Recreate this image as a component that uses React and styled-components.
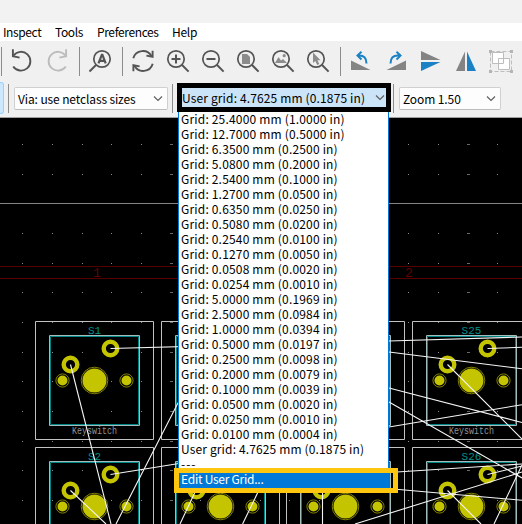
import React from "react";
import styled, { createGlobalStyle } from "styled-components";

const GlobalStyle = createGlobalStyle`
  * { box-sizing: border-box; }
  body { margin: 0; background: #000; overflow: hidden; }
`;

const Window = styled.div`
  position: relative;
  display: flex;
  flex-direction: column;
  width: 522px;
  height: 524px;
  overflow: hidden;
  background: #000;
  color: #000;
  font: 400 12px/15px "Noto Sans CJK KR", "Noto Sans", sans-serif;
`;

const TitleBar = styled.header`
  flex: none;
  height: 23px;
  background: #f2f2f2;
`;

const MenuBar = styled.nav`
  flex: none;
  display: flex;
  gap: 14px;
  height: 18px;
  padding-left: 3px;
  background: #fff;
  line-height: 18px;
`;

const MenuItem = styled.span`
  flex: none;
  width: ${(p) => p.$width}px;
  letter-spacing: ${(p) => p.$tracking || 0}px;
  white-space: nowrap;
`;

const IconBar = styled.div`
  flex: none;
  height: 42px;
  background: #f0f0f0;
`;

const IconStrip = styled.svg`
  display: block;
`;

const ControlBar = styled.div`
  flex: none;
  display: flex;
  align-items: flex-start;
  height: 35px;
  background: #f0f0f0;
  border-bottom: 1px solid #a0a0a0;
`;

const ActiveTool = styled.div`
  width: 4px;
  height: 32px;
  margin-top: -1px;
  border: 1px solid #99d1ff;
  border-left: 0;
  border-radius: 0 3px 3px 0;
  background: #cce8ff;
`;

const Divider = styled.i`
  width: 1px;
  height: 29px;
  margin: 1px ${(p) => p.$after}px 0 ${(p) => p.$before}px;
  background: #8c8c8c;
`;

const Select = styled.div`
  display: flex;
  align-items: center;
  justify-content: space-between;
  width: ${(p) => p.$width}px;
  height: 23px;
  margin-top: 4px;
  padding: 0 4px 0 3px;
  border: 1px solid #d0d0d0;
  border-bottom-color: #bdbdbd;
  border-radius: 2px;
  background: #fdfdfd;
  white-space: nowrap;
`;

const Label = styled.span`
  letter-spacing: ${(p) => p.$tracking || 0}px;
`;

const GridSelect = styled(Select)`
  width: 214px;
  height: 29px;
  margin-top: 0;
  padding: 0 1px 0 0;
  border: 5px solid #000;
  border-radius: 0;
  background: #cce4f7;
`;

const Canvas = styled.svg`
  flex: none;
  display: block;
`;

const GridMenu = styled.ul`
  position: absolute;
  left: 178px;
  top: 112px;
  width: 211px;
  margin: 0;
  padding: 0;
  list-style: none;
  border: solid #0078d7;
  border-width: 0 1px 1px;
  background: #fff;
`;

const GridOption = styled.li`
  height: 15px;
  padding-left: 2px;
  line-height: 13px;
  letter-spacing: ${(p) => p.$tracking ?? 0.18}px;
  white-space: nowrap;
  color: ${(p) => (p.$active ? "#fff" : "#000")};
  background: ${(p) => (p.$active ? "#0078d7" : "transparent")};
`;

const Highlight = styled.div`
  position: absolute;
  left: 174px;
  top: 468px;
  width: 224px;
  height: 25px;
  border: 5px solid #ffc610;
`;

const Chevron = () => (
  <svg width="10" height="7" viewBox="0 0 10 7">
    <path d="M1 1.5l4 4 4-4" fill="none" stroke="#5c5c5c" strokeWidth="1.1" />
  </svg>
);

const GRIDS = [
  "25.4000 mm (1.0000 in)", "12.7000 mm (0.5000 in)", "6.3500 mm (0.2500 in)",
  "5.0800 mm (0.2000 in)", "2.5400 mm (0.1000 in)", "1.2700 mm (0.0500 in)",
  "0.6350 mm (0.0250 in)", "0.5080 mm (0.0200 in)", "0.2540 mm (0.0100 in)",
  "0.1270 mm (0.0050 in)", "0.0508 mm (0.0020 in)", "0.0254 mm (0.0010 in)",
  "5.0000 mm (0.1969 in)", "2.5000 mm (0.0984 in)", "1.0000 mm (0.0394 in)",
  "0.5000 mm (0.0197 in)", "0.2500 mm (0.0098 in)", "0.2000 mm (0.0079 in)",
  "0.1000 mm (0.0039 in)", "0.0500 mm (0.0020 in)", "0.0250 mm (0.0010 in)",
  "0.0100 mm (0.0004 in)",
];

const Magnifier = ({ x, children }) => (
  <g transform={`translate(${x} 59)`}>
    <circle r="8.2" fill="none" stroke="#545454" strokeWidth="1.7" />
    <path d="M5.8 5.8L12.6 12.6" stroke="#545454" strokeWidth="2" />
    {children}
  </g>
);

const Icons = () => (
  <IconStrip width="522" height="42" viewBox="0 41 522 42">
    <g fill="none" stroke="#8c8c8c">
      <path d="M1.5 47v29M79.5 47v29M122.5 47v29M340.5 47v29" />
    </g>
    <g fill="none" stroke="#545454" strokeWidth="1.9">
      <path d="M13.5 55.5A9.4 9.4 0 1 1 13.2 66.5" />
      <path d="M12.9 49.3V56.2L19.6 57.6" strokeWidth="1.9" />
      <g stroke="#bcbcbc">
        <path d="M65.5 55.5A9.4 9.4 0 1 0 65.8 66.5" />
        <path d="M66.1 49.3V56.2L59.4 57.6" strokeWidth="1.9" />
      </g>
      <path d="M133.3 58.3A9.9 9.9 0 0 1 151.6 56.4M152.7 63.7A9.9 9.9 0 0 1 134.4 65.6" />
      <path d="M152.6 50.8V56.8L146.4 55.6M133.4 71.2V65.2L139.6 66.4" strokeWidth="1.9" />
    </g>
    <g>
      <circle cx="102" cy="59" r="8.2" fill="none" stroke="#545454" strokeWidth="1.7" />
      <path d="M96 65L89.5 71.5" stroke="#545454" strokeWidth="2" />
      <path d="M98.5 63.4L101.8 54.8H102.4L105.7 63.4M99.8 60.8H104.4" fill="none" stroke="#545454" strokeWidth="2.2" />
    </g>
    <Magnifier x={176}><path d="M-4.5 0h9M0-4.5v9" stroke="#545454" strokeWidth="2" /></Magnifier>
    <Magnifier x={211}><path d="M-4.5 0h9" stroke="#545454" strokeWidth="2" /></Magnifier>
    <Magnifier x={246}><path d="M-4-5h5l3 3v7h-8z" fill="#8c8c8c" /></Magnifier>
    <Magnifier x={281}>
      <path d="M-6 4l3.5-6 2.5 3.5 2-1.5 4 4z" fill="#8c8c8c" />
      <circle cx="3.2" cy="-3.3" r="1.6" fill="#8c8c8c" />
    </Magnifier>
    <Magnifier x={316}>
      <path d="M-3-6.5V4L-.7 2 1.2 6 3.3 5 1.5 1.3H4.5z" fill="#8c8c8c" />
    </Magnifier>
    <path d="M351 60.5V70H370.5zM406 60.5V70H386.5z" fill="#848484" />
    <g fill="none" stroke="#1a81c4" strokeWidth="2">
      <path d="M358 55.5C364 55 366.5 58 366.5 63.5M361.5 51.8L357.5 55.6L361.5 59.4" />
      <path d="M399 55.5C393 55 390.5 58 390.5 63.5M396.5 51.8L400.5 55.6L396.5 59.4" />
    </g>
    <path d="M421 51V60H440.5z" fill="#848484" />
    <path d="M421 62V71L440.5 62z" fill="#1a81c4" />
    <path d="M465 51.5V71H456z" fill="#848484" />
    <path d="M467 51.5V71H476z" fill="#1a81c4" />
    <g stroke="#bdbdbd" fill="none">
      <path d="M490.5 51.5H511.5V71.5H490.5z" strokeDasharray="4 2" />
      <path d="M492.5 52.5h11v11h-11zM498.5 58.5h11v11h-11z" fill="#fff" />
    </g>
    <path d="M489 50h3v3h-3zM510 50h3v3h-3zM489 70h3v3h-3zM510 70h3v3h-3z" fill="#b5b5b5" />
  </IconStrip>
);

const Mark = styled.text`
  font-family: "Liberation Mono", monospace;
  font-size: ${(p) => p.$size}px;
  text-anchor: middle;
`;

const Footprint = ({ x, y, name, value }) => (
  <g transform={`translate(${x} ${y})`}>
    <path d="M-59-59H59V59H-59z" fill="none" stroke="#c2c2c2" />
    <path d="M-45-45H45V45H-45z" fill="none" stroke="#a5bcbc" />
    <path d="M-44-44H44V44H-44z" fill="none" stroke="#008484" />
    {name && <Mark x="0" y="-46.5" fill="#009090" $size={11}>{name}</Mark>}
    {value && (
      <Mark x="0" y="53.5" fill="#949494" $size={11} textLength="45" lengthAdjust="spacingAndGlyphs">{value}</Mark>
    )}
    <circle r="13.3" fill="#000" stroke="#848400" />
    <circle r="12" fill="#c4c400" />
    {[-32, 32].map((cx) => (
      <g key={cx}>
        <circle cx={cx} r="6.6" fill="#000" stroke="#848400" />
        <circle cx={cx} r="5" fill="#c4c400" />
      </g>
    ))}
    <circle cx="-24" cy="-16" r="6.8" fill="#000" stroke="#c4c400" strokeWidth="4.4" />
    <circle cx="16" cy="-32" r="6.8" fill="#000" stroke="#c4c400" strokeWidth="4.4" />
  </g>
);

const DOT_X = Array.from({ length: 17 }, (_, i) => Math.floor(22.6 + i * 29.7));
const DOT_Y = Array.from({ length: 13 }, (_, i) => Math.floor(144.6 + i * 29.67));

const FOOTPRINTS = [
  { x: 94.5, y: 380.5, name: "S1", value: "Keyswitch" },
  { x: 220.5, y: 380.5 },
  { x: 345.5, y: 380.5 },
  { x: 471.5, y: 380.5, name: "S25", value: "Keyswitch" },
  { x: 94.5, y: 506.5, name: "S2" },
  { x: 220.5, y: 506.5 },
  { x: 345.5, y: 506.5 },
  { x: 471.5, y: 506.5, name: "S26" },
];

const RATSNEST = [
  "M110.5 348.5L389 341L522 337", "M70.5 364.5L111 524", "M179 401L116 524",
  "M110.5 474.5L179 463.5", "M70.5 490.5L106 524", "M389 352L522 368.7",
  "M389 388L522 422.5", "M389 402L522 478", "M389 427L522 404.7",
  "M487.5 348.5L522 347.3", "M447.5 364.5L522 439", "M389 472.5L522 464",
  "M376 487.5L522 500.3", "M355 524L522 472", "M487.5 474.5L522 466",
  "M447.5 490.5L481 524", "M522 465L494 524", "M180 524L196 490",
  "M242.6 524L259 490", "M322.5 490V524",
].join("");

const Board = () => (
  <Canvas width="522" height="406" viewBox="0 118 522 406">
    {DOT_Y.map((y) => DOT_X.map((x, i) => (
      <rect key={`${x}-${y}`} x={i % 10 === 5 ? x - 1 : x} y={y} width={i % 10 === 5 ? 3 : 1} height="1" fill={i % 10 === 5 ? "#686868" : "#8c8c8c"} />
    )))}
    <path d="M0 203.5H522" stroke="#848484" />
    <path d="M0 266.5H522M0 278.5H522" stroke="#560000" />
    <Mark x="97" y="277" fill="#600000" $size={13}>1</Mark>
    <Mark x="409" y="277" fill="#600000" $size={13}>2</Mark>
    {FOOTPRINTS.map((f) => <Footprint key={`${f.x}-${f.y}`} {...f} />)}
    <path d={RATSNEST} fill="none" stroke="#f4f4f4" strokeWidth="1.1" />
  </Canvas>
);

export default function App() {
  return (
    <Window>
      <GlobalStyle />
      <TitleBar />
      <MenuBar>
        <MenuItem $width={38} $tracking={-0.4}>Inspect</MenuItem>
        <MenuItem $width={28} $tracking={-0.35}>Tools</MenuItem>
        <MenuItem $width={61} $tracking={-0.38}>Preferences</MenuItem>
        <MenuItem $width={26} $tracking={-0.3}>Help</MenuItem>
      </MenuBar>
      <IconBar><Icons /></IconBar>
      <ControlBar>
        <ActiveTool />
        <Divider $before={4} $after={5} />
        <Select $width={154}><Label $tracking={-0.12}>Via: use netclass sizes</Label><Chevron /></Select>
        <Divider $before={4} $after={4} />
        <GridSelect><Label $tracking={0.14}>User grid: 4.7625 mm (0.1875 in)</Label><Chevron /></GridSelect>
        <Divider $before={2} $after={5} />
        <Select $width={102}><Label $tracking={-0.1}>Zoom 1.50</Label><Chevron /></Select>
      </ControlBar>
      <Board />
      <GridMenu>
        {GRIDS.map((g) => <GridOption key={g}>Grid: {g}</GridOption>)}
        <GridOption $tracking={0.14}>User grid: 4.7625 mm (0.1875 in)</GridOption>
        <GridOption $tracking={1}>---</GridOption>
        <GridOption $active $tracking={-0.25}>Edit User Grid...</GridOption>
      </GridMenu>
      <Highlight />
    </Window>
  );
}
